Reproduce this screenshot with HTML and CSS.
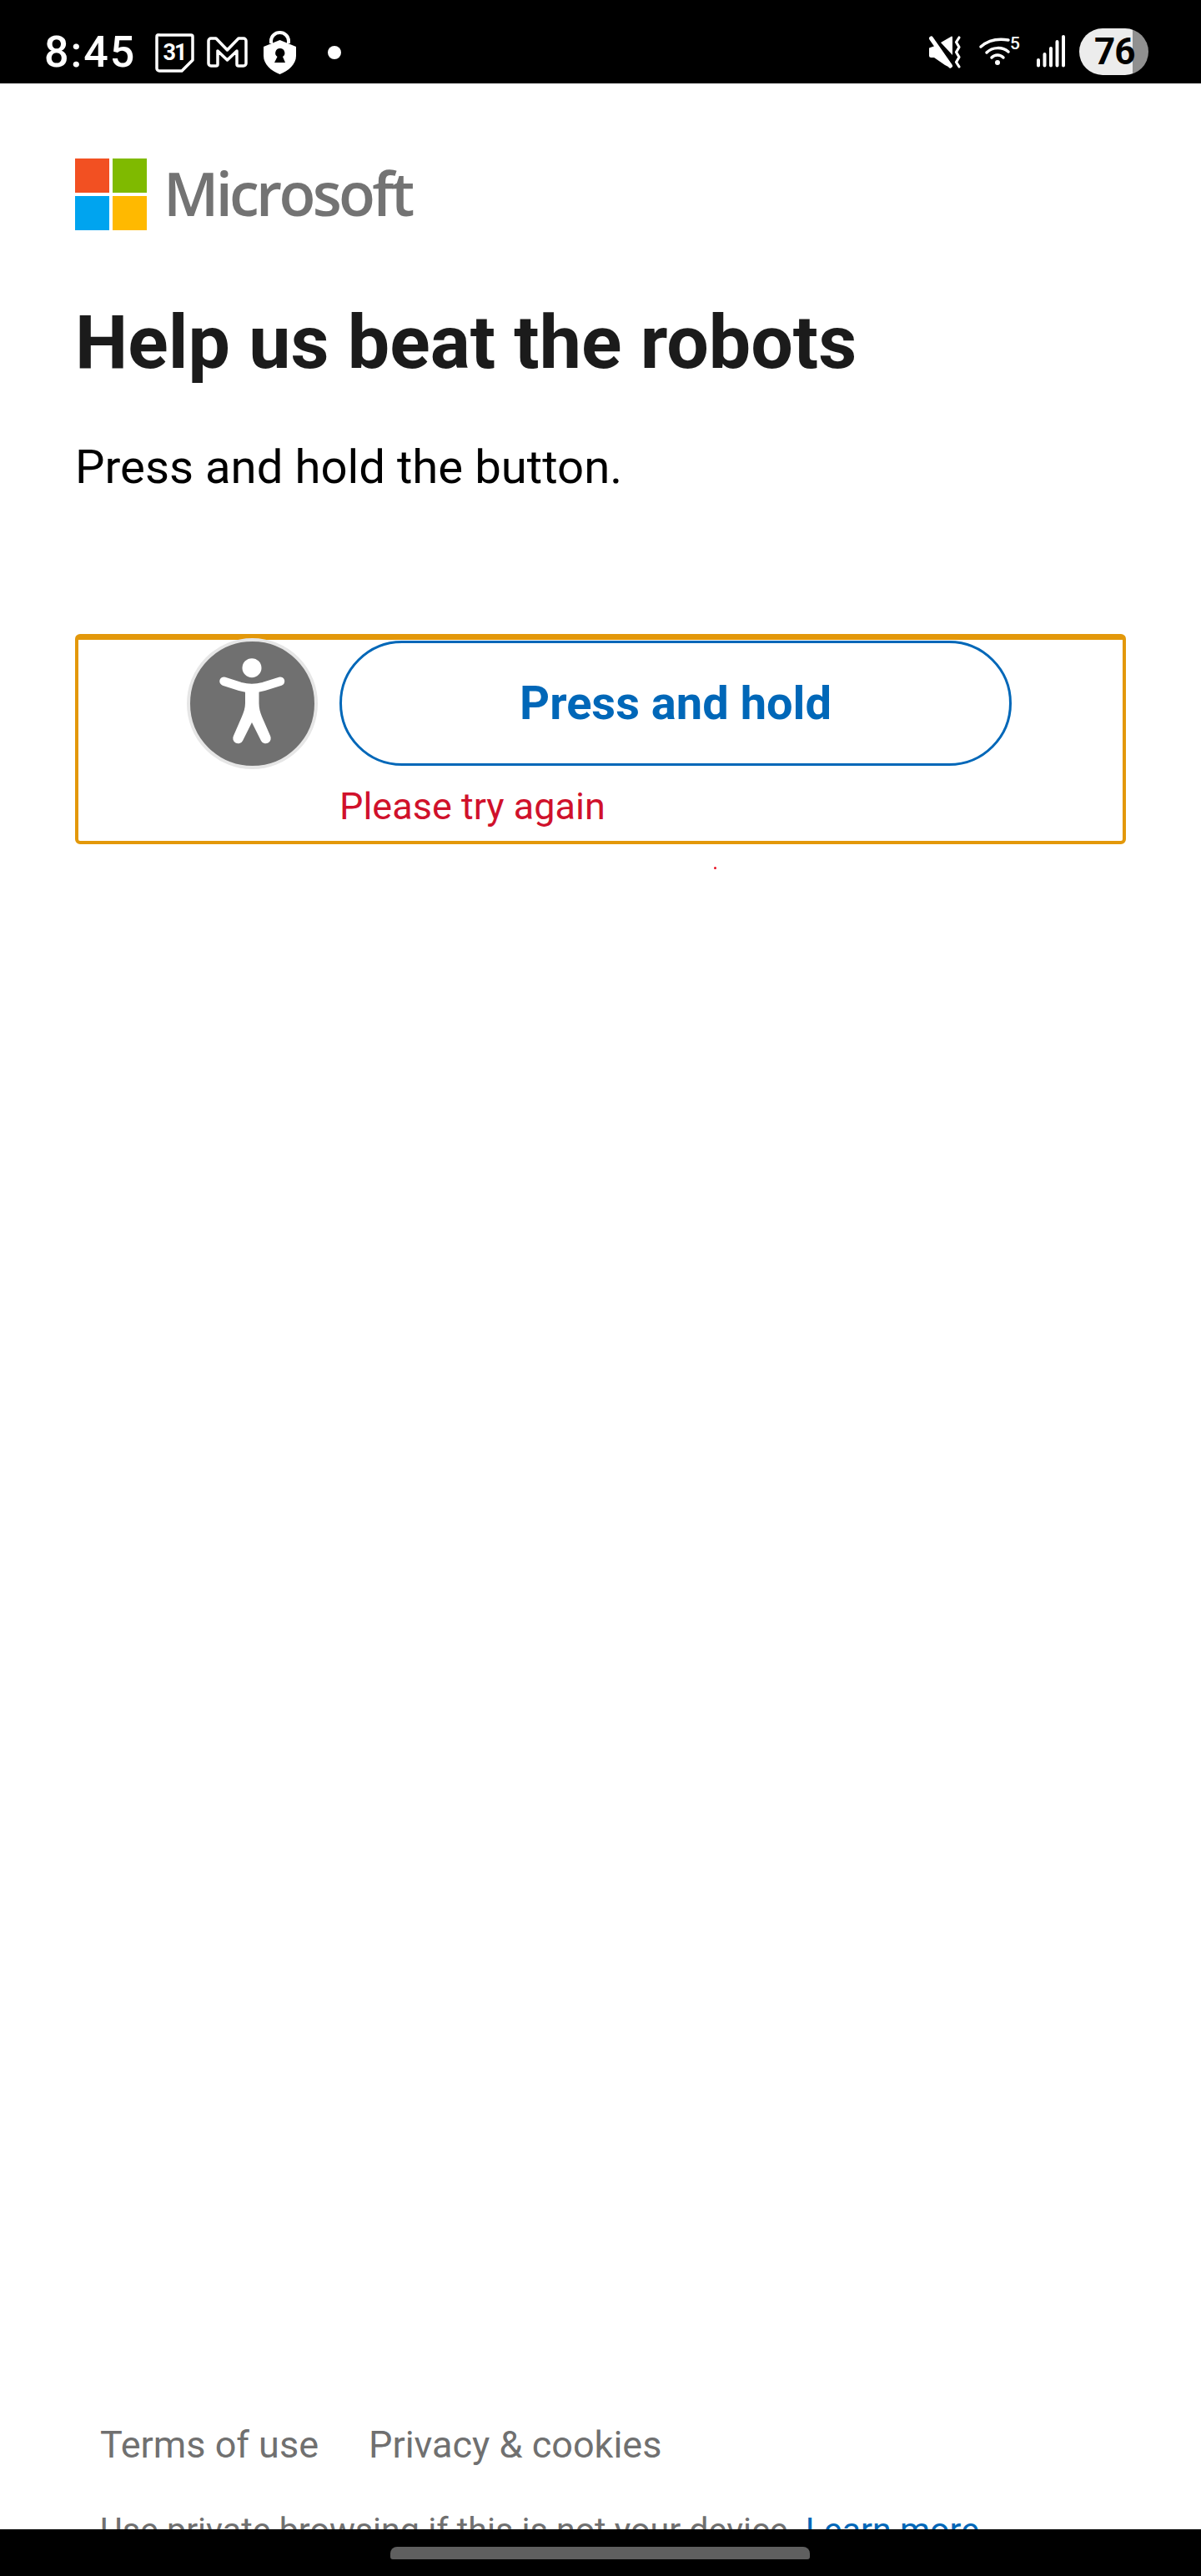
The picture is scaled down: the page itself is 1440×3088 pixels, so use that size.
FILE: index.html
```html
<!DOCTYPE html>
<html lang="en">
<head>
<meta charset="utf-8">
<title>Help us beat the robots</title>
<link rel="stylesheet" href="styles.css">
</head>
<body>
<div class="phone">
  <header class="status">
    <span class="time">8:45</span>
    <svg class="ic-cal" viewBox="0 0 47 47"><path d="M5 2H43a2 2 0 0 1 2 2V32L32 45H5a3 3 0 0 1-3-3V4A2 2 0 0 1 5 2Z" fill="none" stroke="#fff" stroke-width="3.500" stroke-linejoin="round"/><text x="9.500" y="32" class="cal-num">31</text></svg>
    <svg class="ic-m" viewBox="0 0 49 37"><path d="M5 2H11L24.500 16 38 2H44a3 3 0 0 1 3 3V32a3 3 0 0 1-3 3H38a2 2 0 0 1-2-2V17L24.500 28 13 17V33a2 2 0 0 1-2 2H5a3 3 0 0 1-3-3V5A3 3 0 0 1 5 2Z" fill="none" stroke="#fff" stroke-width="3.500" stroke-linejoin="round"/></svg>
    <svg class="ic-lock" viewBox="0 0 39 52"><path d="M9 15V12A10.500 10 0 0 1 30 12V15" fill="none" stroke="#fff" stroke-width="4"/><path fill-rule="evenodd" fill="#fff" d="M19.500 11L39 19V30C39 40 30 48 19.500 52 9 48 0 40 0 30V19ZM19.500 21a5.500 5.500 0 0 0-3 10L13 38H26L23 31a5.500 5.500 0 0 0-3.500-10Z"/></svg>
    <span class="dot"></span>
    <span class="spacer"></span>
    <svg class="ic-mute" viewBox="0 0 40 39"><path fill="#fff" d="M1 14.500L8 12 27 38.500 20 35 7 26H3.500A2.500 2.500 0 0 1 1 23.500ZM15 8L28 .5A1 1 0 0 1 29 1.500V23Z"/><path d="M3.500 3L26.500 36" fill="none" stroke="#fff" stroke-width="5" stroke-linecap="round"/><path d="M37 2L33.500 7.500 37 13.500 33.500 19.500 37 25.500 33.500 31.500 37 37" fill="none" stroke="#fff" stroke-width="3.200" stroke-linecap="round" stroke-linejoin="round"/></svg>
    <svg class="ic-wifi" viewBox="0 0 49 34"><path d="M3 12C12 4 24 2 36 4M10 19C17 12 29 12 36 18M16 25C20 21 26 21 30 25" fill="none" stroke="#fff" stroke-width="3.500" stroke-linecap="round"/><circle cx="23" cy="31" r="3" fill="#fff"/><text x="38" y="15" class="wifi-num">5</text></svg>
    <svg class="ic-sig" viewBox="0 0 36 39"><path d="M3 30V36.500M10.500 23V36.500M18 16V36.500M25.500 8V36.500M33 2V36.500" fill="none" stroke="#fff" stroke-width="4" stroke-linecap="round"/></svg>
    <span class="batt"><span class="batt-num">76</span></span>
  </header>
  <main class="page">
    <div class="logo">
      <span class="tiles"><i class="t-r"></i><i class="t-g"></i><i class="t-b"></i><i class="t-y"></i></span>
      <span class="word">Microsoft</span>
    </div>
    <h1 class="title">Help us beat the robots</h1>
    <p class="sub">Press and hold the button.</p>
    <section class="captcha">
      <div class="row">
        <span class="a11y"><svg viewBox="0 0 149 149"><circle cx="74" cy="31.700" r="11.500" fill="#fff"/><path d="M40.500 47.700L60 54Q74 58 88 54L108 47.700" fill="none" stroke="#fff" stroke-width="10.500" stroke-linecap="round" stroke-linejoin="round"/><path fill="#fff" d="M66 56H82.500V74C82.500 80 84 85 86 90L96 113A6.200 6.200 0 0 1 85 119L74 97 63 119A6.200 6.200 0 0 1 52 113L62 90C64 85 66 80 66 74Z"/></svg></span>
        <button class="hold">Press and hold</button>
      </div>
      <p class="err">Please try again</p>
    </section>
    <i class="speck"></i>
    <footer class="foot">
      <nav class="links"><a>Terms of use</a><a>Privacy &amp; cookies</a></nav>
      <p class="private">Use private browsing if this is not your device. <a>Learn more</a></p>
    </footer>
  </main>
  <div class="navbar"><span class="pill"></span></div>
</div>
</body>
</html>
```
FILE: styles.css
```css
* { box-sizing: border-box; }
html, body { margin: 0; padding: 0; background: #fff; }
.phone { width: 1440px; height: 3088px; display: flex; flex-direction: column; font-family: Roboto, "Liberation Sans", sans-serif; overflow: hidden; }

.status { height: 100px; flex: none; background: #000; display: flex; align-items: flex-start; padding-left: 53px; color: #fff; }
.time { font-size: 52px; font-weight: 500; line-height: 36px; margin-top: 45px; width: 107px; letter-spacing: 2px; white-space: nowrap; }
.status svg { flex: none; display: block; overflow: visible; }
.ic-cal { width: 47px; height: 47px; margin: 40px 0 0 26px; }
.cal-num { font: 700 27px Roboto, sans-serif; fill: #fff; letter-spacing: -2px; }
.ic-m { width: 49px; height: 37px; margin: 44px 0 0 15px; }
.ic-lock { width: 39px; height: 52px; margin: 37px 0 0 19px; }
.dot { width: 16px; height: 16px; border-radius: 50%; background: #fff; margin: 55px 0 0 38px; }
.spacer { flex: 1; }
.ic-mute { width: 40px; height: 39px; margin-top: 43px; }
.ic-wifi { width: 49px; height: 34px; margin: 44px 0 0 20px; }
.wifi-num { font: 500 21px Roboto, sans-serif; fill: #fff; }
.ic-sig { width: 36px; height: 39px; margin: 42px 0 0 20px; }
.batt { width: 83px; height: 56px; margin: 34px 63px 0 16px; border-radius: 28px; background: linear-gradient(90deg, #ececec 64px, #909090 64px); display: flex; align-items: center; padding-left: 18px; }
.batt-num { color: #000; font-size: 44px; font-weight: 700; line-height: 1; letter-spacing: -1px; }

.page { flex: 1; min-height: 0; overflow: hidden; padding: 90px 90px 0; display: flex; flex-direction: column; align-items: stretch; }
.page > * { flex: none; }
.logo { display: flex; align-items: center; height: 86px; }
.tiles { display: grid; grid-template-columns: 41px 41px; grid-template-rows: 41px 41px; gap: 4px; }
.tiles i { display: block; }
.t-r { background: #f25022; }
.t-g { background: #7fba00; }
.t-b { background: #00a4ef; }
.t-y { background: #ffb900; }
.word { font-family: "Open Sans", sans-serif; font-size: 72px; font-weight: 600; color: #737373; margin: 0 0 4px 20px; letter-spacing: -3.700px; line-height: 86px; }
.title { margin: 85px 0 0; font-size: 89.700px; line-height: 100px; font-weight: 700; color: #1b1b1b; }
.sub { margin: 63px 0 0; font-size: 56.300px; line-height: 72px; font-weight: 400; color: #000; }
.captcha { margin-top: 164px; height: 252px; border: 4px solid #e3980a; border-top-width: 7px; border-radius: 6px; padding-left: 130px; }
.row { display: flex; align-items: flex-start; }
.a11y { width: 157px; height: 157px; border-radius: 50%; background: #707070; border: 4px solid #e6e6e6; display: block; margin-top: -2px; flex: none; }
.a11y svg { display: block; width: 100%; height: 100%; }
.hold { width: 806px; height: 150px; margin: 1px 0 0 26px; border: 3px solid #0067b8; border-radius: 75px; background: #fff; color: #0067b8; font: 700 56px Roboto, sans-serif; padding: 0; }
.err { margin: 15px 0 0 183px; font-size: 45px; line-height: 60px; color: #d0112b; }
.speck { display: block; width: 3px; height: 3px; border-radius: 50%; background: #e81123; margin: 27px 0 0 766px; }
.foot { margin-top: 1859px; padding-left: 30px; font-size: 45px; color: #707070; }
.links { display: flex; gap: 60px; line-height: 60px; }
.private { margin: 42px 0 0; font-size: 41.200px; line-height: 60px; white-space: nowrap; }
.private a { color: #0067b8; }

.navbar { height: 56px; flex: none; background: #000; padding: 21px 0 0 468px; }
.pill { display: block; width: 503px; height: 15px; background: #5f5f5f; border-radius: 8px 8px 3px 3px; }
```
